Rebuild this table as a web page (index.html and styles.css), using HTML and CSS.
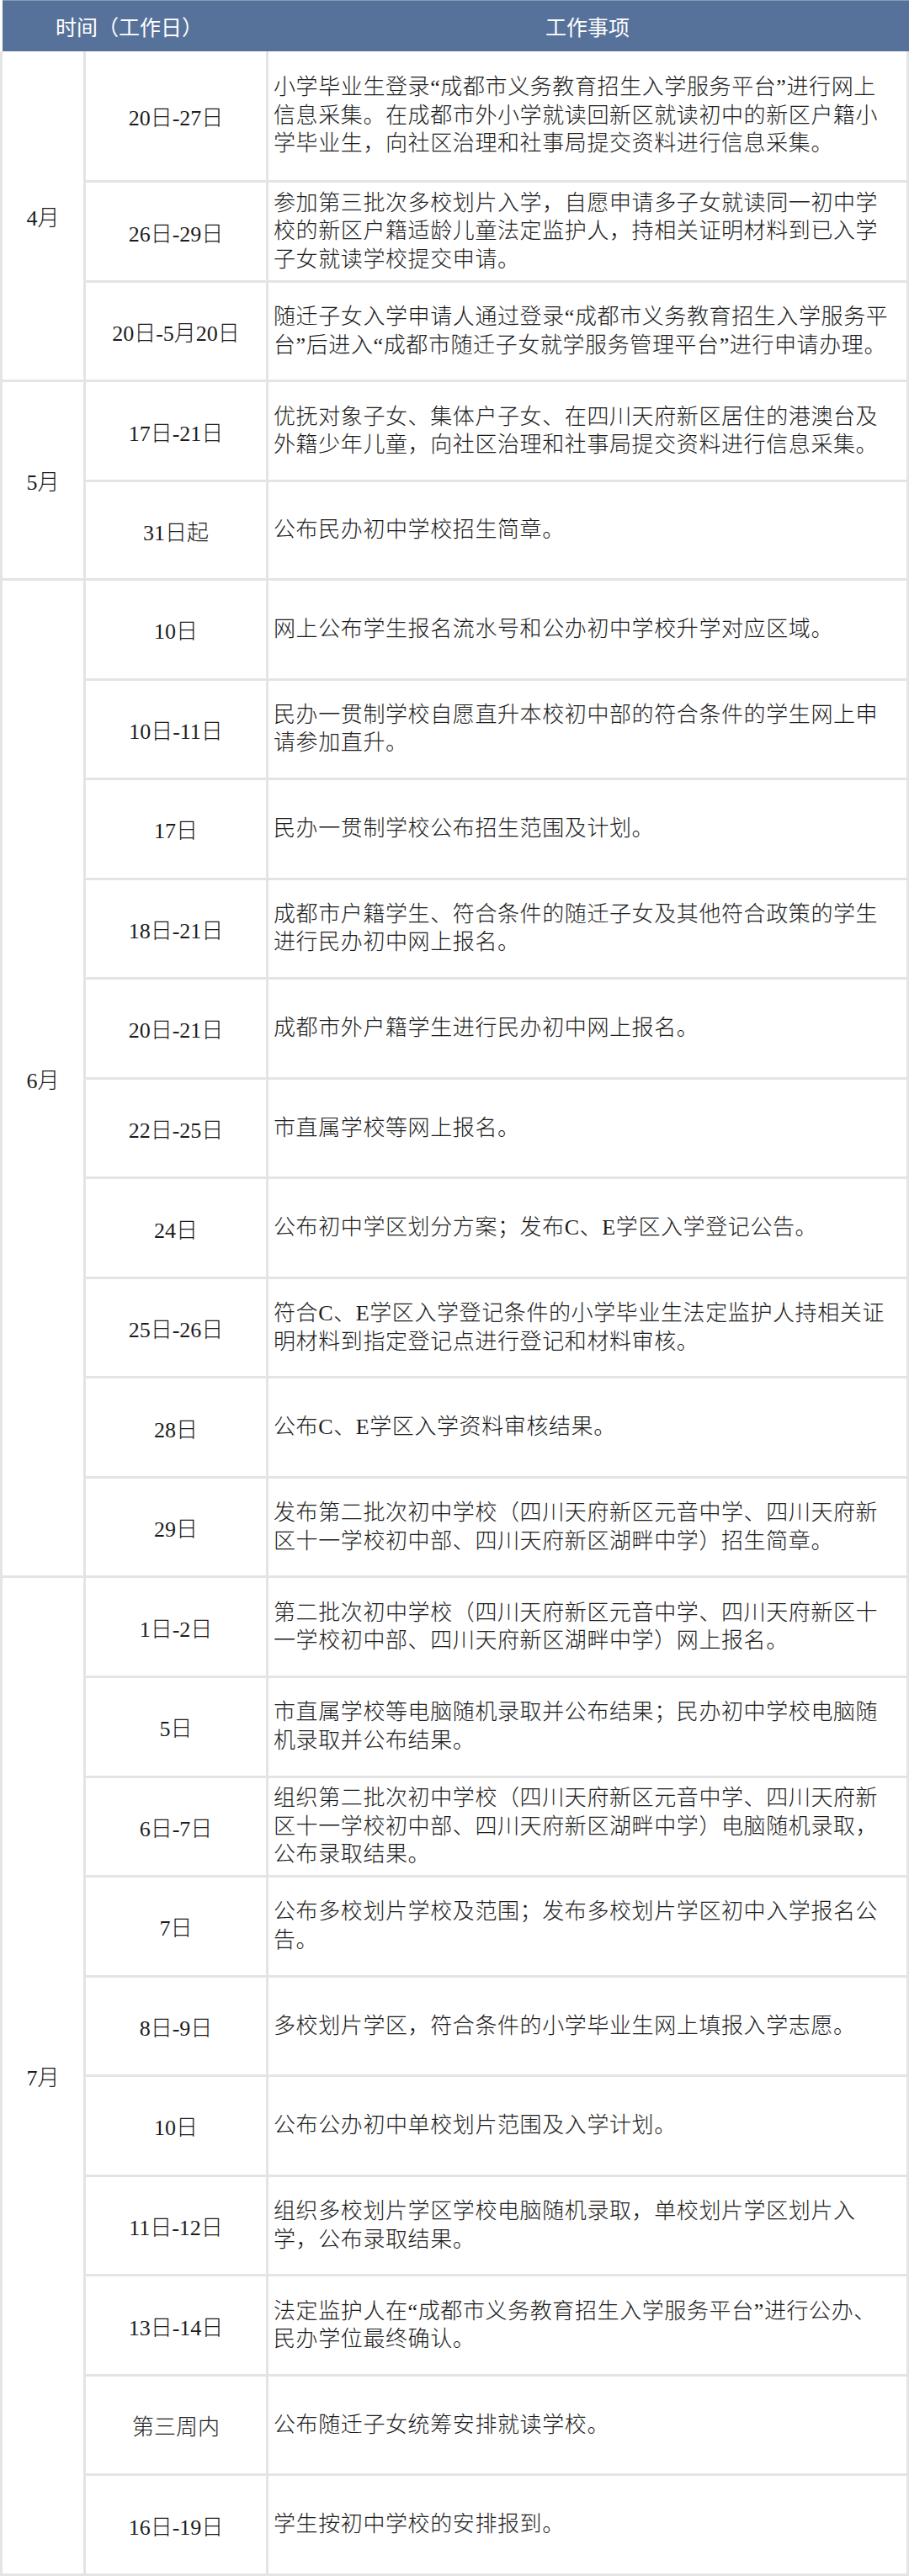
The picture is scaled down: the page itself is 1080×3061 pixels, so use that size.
FILE: index.html
```html
<!DOCTYPE html>
<html lang="zh-CN">
<head>
<meta charset="utf-8">
<title>招生日程</title>
<link rel="stylesheet" href="styles.css">
</head>
<body>
<div class="sheet">
  <div class="head">
    <div class="head-time">时间（工作日）</div>
    <div class="head-item">工作事项</div>
  </div>
  <div class="grid">
    <div class="month m4">4月</div>
    <div class="date">20日-27日</div>
    <div class="item">小学毕业生登录“成都市义务教育招生入学服务平台”进行网上<br>信息采集。在成都市外小学就读回新区就读初中的新区户籍小<br>学毕业生，向社区治理和社事局提交资料进行信息采集。</div>
    <div class="date">26日-29日</div>
    <div class="item">参加第三批次多校划片入学，自愿申请多子女就读同一初中学<br>校的新区户籍适龄儿童法定监护人，持相关证明材料到已入学<br>子女就读学校提交申请。</div>
    <div class="date">20日-5月20日</div>
    <div class="item">随迁子女入学申请人通过登录“成都市义务教育招生入学服务平<br>台”后进入“成都市随迁子女就学服务管理平台”进行申请办理。</div>

    <div class="month m5">5月</div>
    <div class="date">17日-21日</div>
    <div class="item">优抚对象子女、集体户子女、在四川天府新区居住的港澳台及<br>外籍少年儿童，向社区治理和社事局提交资料进行信息采集。</div>
    <div class="date">31日起</div>
    <div class="item">公布民办初中学校招生简章。</div>

    <div class="month m6">6月</div>
    <div class="date">10日</div>
    <div class="item">网上公布学生报名流水号和公办初中学校升学对应区域。</div>
    <div class="date">10日-11日</div>
    <div class="item">民办一贯制学校自愿直升本校初中部的符合条件的学生网上申<br>请参加直升。</div>
    <div class="date">17日</div>
    <div class="item">民办一贯制学校公布招生范围及计划。</div>
    <div class="date">18日-21日</div>
    <div class="item">成都市户籍学生、符合条件的随迁子女及其他符合政策的学生<br>进行民办初中网上报名。</div>
    <div class="date">20日-21日</div>
    <div class="item">成都市外户籍学生进行民办初中网上报名。</div>
    <div class="date">22日-25日</div>
    <div class="item">市直属学校等网上报名。</div>
    <div class="date">24日</div>
    <div class="item">公布初中学区划分方案；发布C、E学区入学登记公告。</div>
    <div class="date">25日-26日</div>
    <div class="item">符合C、E学区入学登记条件的小学毕业生法定监护人持相关证<br>明材料到指定登记点进行登记和材料审核。</div>
    <div class="date">28日</div>
    <div class="item">公布C、E学区入学资料审核结果。</div>
    <div class="date">29日</div>
    <div class="item">发布第二批次初中学校（四川天府新区元音中学、四川天府新<br>区十一学校初中部、四川天府新区湖畔中学）招生简章。</div>

    <div class="month m7">7月</div>
    <div class="date">1日-2日</div>
    <div class="item">第二批次初中学校（四川天府新区元音中学、四川天府新区十<br>一学校初中部、四川天府新区湖畔中学）网上报名。</div>
    <div class="date">5日</div>
    <div class="item">市直属学校等电脑随机录取并公布结果；民办初中学校电脑随<br>机录取并公布结果。</div>
    <div class="date">6日-7日</div>
    <div class="item">组织第二批次初中学校（四川天府新区元音中学、四川天府新<br>区十一学校初中部、四川天府新区湖畔中学）电脑随机录取，<br>公布录取结果。</div>
    <div class="date">7日</div>
    <div class="item">公布多校划片学校及范围；发布多校划片学区初中入学报名公<br>告。</div>
    <div class="date">8日-9日</div>
    <div class="item">多校划片学区，符合条件的小学毕业生网上填报入学志愿。</div>
    <div class="date">10日</div>
    <div class="item">公布公办初中单校划片范围及入学计划。</div>
    <div class="date">11日-12日</div>
    <div class="item">组织多校划片学区学校电脑随机录取，单校划片学区划片入<br>学，公布录取结果。</div>
    <div class="date">13日-14日</div>
    <div class="item">法定监护人在“成都市义务教育招生入学服务平台”进行公办、<br>民办学位最终确认。</div>
    <div class="date">第三周内</div>
    <div class="item">公布随迁子女统筹安排就读学校。</div>
    <div class="date">16日-19日</div>
    <div class="item">学生按初中学校的安排报到。</div>
  </div>
</div>
</body>
</html>
```
FILE: styles.css
```css
html, body {
  margin: 0;
  padding: 0;
  background: #ffffff;
}

.sheet {
  width: 1080px;
  font-family: "Liberation Serif", "Noto Sans CJK SC", serif;
  font-weight: 300;
  color: #1c1c1c;
}

.head {
  display: flex;
  height: 61px;
  margin-left: 3px;
  background: #57729a;
  border-top: 1px solid #8a9bb5;
  box-sizing: border-box;
  color: #ffffff;
  font-family: "Noto Sans CJK SC", "Noto Sans", sans-serif;
  font-size: 25px;
  font-weight: 400;
}

.head-time {
  width: 313px;
  display: flex;
  align-items: center;
  justify-content: center;
  padding-right: 12px;
  box-sizing: border-box;
}

.head-item {
  flex: 1;
  display: flex;
  align-items: center;
  justify-content: center;
}

.grid {
  display: grid;
  grid-template-columns: 96px 214px 758px;
  grid-template-rows: 153px 116px 115px 116px 114px repeat(20, 115.55px);
  gap: 3px;
  padding: 0 3px 3px 3px;
  background: #e4e4e4;
}

.grid > div {
  background: #ffffff;
  display: flex;
  align-items: center;
}

.month {
  grid-column: 1;
  justify-content: center;
  font-size: 26px;
}

.m4 { grid-row: 1 / span 3; }
.m5 { grid-row: 4 / span 2; }
.m6 { grid-row: 6 / span 10; }
.m7 { grid-row: 16 / span 10; }

.date {
  grid-column: 2;
  justify-content: center;
  font-size: 26px;
  white-space: nowrap;
}

.item {
  grid-column: 3;
  padding-left: 6px;
  font-size: 26px;
  line-height: 33.5px;
  letter-spacing: 0.6px;
  white-space: nowrap;
}
```
